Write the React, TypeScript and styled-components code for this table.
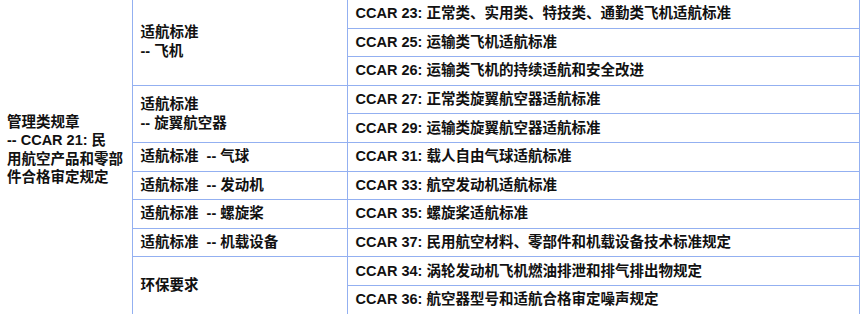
import * as React from 'react';
import styled, {createGlobalStyle} from 'styled-components';

const GlobalStyle = createGlobalStyle`
  html, body {
    margin: 0;
    padding: 0;
    background: #fff;
  }
  body {
    font-family: "Liberation Sans", "Noto Sans CJK SC", sans-serif;
    color: #111;
  }
`;

const Page = styled.div`
  width: 860px;
  height: 314px;
  overflow: hidden;
`;

const Table = styled.table`
  border-collapse: collapse;
  table-layout: fixed;
  width: 861px;
  margin: -1px 0 0 -1px;
  font-size: 14.5px;
  font-weight: 700;
`;

const Cell = styled.td<{ $pad?: number }>`
  border: 1px solid #93b0f1;
  height: 27.6px;
  padding: 0 4px 0 ${p => p.$pad ?? 8}px;
  vertical-align: middle;
  line-height: 19px;
  white-space: pre;
`;

const Group = styled(Cell)`
  border-left: none;
  padding-bottom: 14px;
  line-height: 18.5px;
`;

type Sub = { title: React.ReactNode; items: string[] };

const groups: Sub[] = [
  {
    title: <>适航标准<br/>-- 飞机</>,
    items: [
      'CCAR 23: 正常类、实用类、特技类、通勤类飞机适航标准',
      'CCAR 25: 运输类飞机适航标准',
      'CCAR 26: 运输类飞机的持续适航和安全改进',
    ],
  },
  {
    title: <>适航标准<br/>-- 旋翼航空器</>,
    items: [
      'CCAR 27: 正常类旋翼航空器适航标准',
      'CCAR 29: 运输类旋翼航空器适航标准',
    ],
  },
  {title: '适航标准  -- 气球', items: ['CCAR 31: 载人自由气球适航标准']},
  {title: '适航标准  -- 发动机', items: ['CCAR 33: 航空发动机适航标准']},
  {title: '适航标准  -- 螺旋桨', items: ['CCAR 35: 螺旋桨适航标准']},
  {title: '适航标准  -- 机载设备', items: ['CCAR 37: 民用航空材料、零部件和机载设备技术标准规定']},
  {
    title: '环保要求',
    items: [
      'CCAR 34: 涡轮发动机飞机燃油排泄和排气排出物规定',
      'CCAR 36: 航空器型号和适航合格审定噪声规定',
    ],
  },
];

const total = groups.reduce((n, g) => n + g.items.length, 0);

export default function App() {
  return (
    <Page>
      <GlobalStyle/>
      <Table>
        <colgroup>
          <col style={{width: 133}}/>
          <col style={{width: 215}}/>
          <col/>
        </colgroup>
        <tbody>
          {groups.map((g, gi) =>
            g.items.map((item, ii) => (
              <tr key={item}>
                {gi === 0 && ii === 0 && (
                  <Group rowSpan={total} $pad={8}>
                    管理类规章<br/>-- CCAR 21: 民<br/>用航空产品和零部<br/>件合格审定规定
                  </Group>
                )}
                {ii === 0 && <Cell rowSpan={g.items.length}>{g.title}</Cell>}
                <Cell>{item}</Cell>
              </tr>
            ))
          )}
        </tbody>
      </Table>
    </Page>
  );
}
